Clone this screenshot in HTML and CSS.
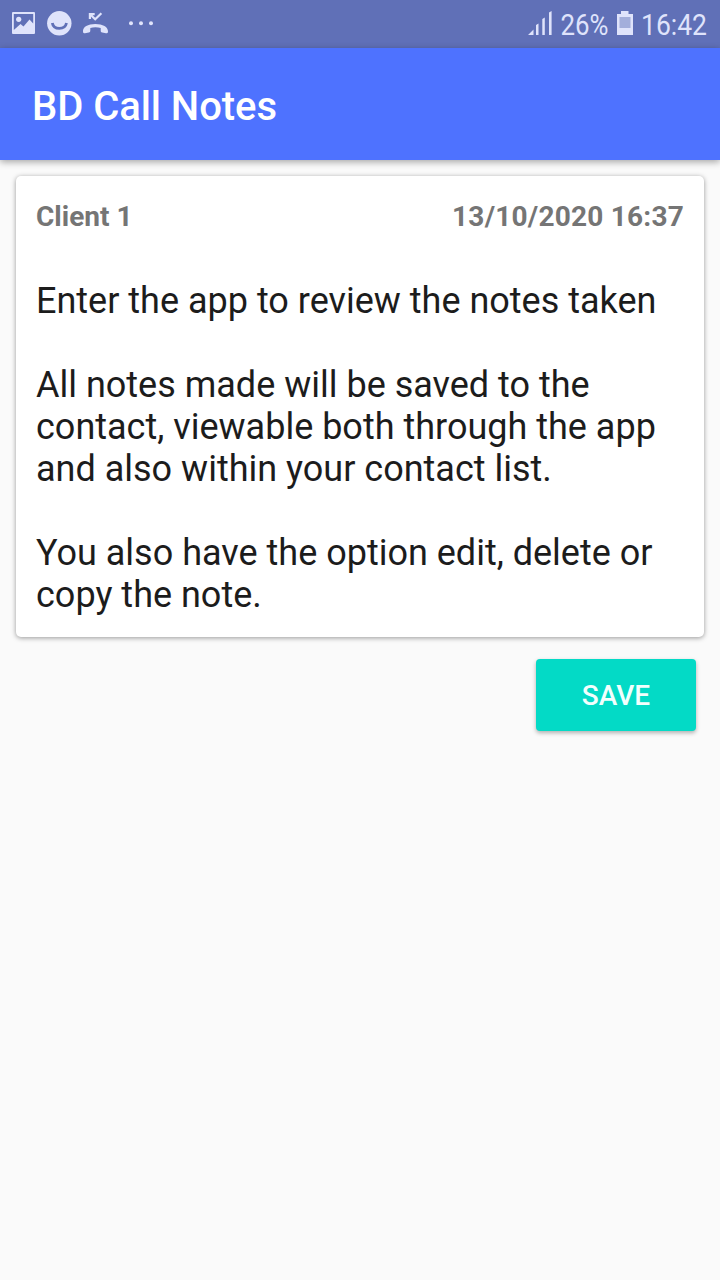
FILE: index.html
```html
<!DOCTYPE html>
<html lang="en">
<head>
    <meta charset="UTF-8">
    <meta name="viewport" content="width=device-width, initial-scale=1.0">
    <title>BD Call Notes</title>
    <link rel="stylesheet" href="styles.css">
</head>

<body>
    <div class="status-bar">
        <!-- Notifications: image, smiley, missed call, more -->
        <svg class="notifications" width="160" height="48" viewBox="0 0 160 48">
            <path fill-rule="evenodd" d="M13 12h21a1 1 0 0 1 1 1v20a1 1 0 0 1-1 1H13a1 1 0 0 1-1-1V13a1 1 0 0 1 1-1zM13.800 14v16l6.700-6 3 2.500 6-7 3.700 4V14z"/>
            <circle cx="18.700" cy="19.300" r="2.600"/>
            <circle cx="59.300" cy="23.300" r="12.200"/>
            <path class="smile" d="M52.300 23c1.300 7.200 12.700 7.200 14.200 0"/>
            <path d="M83 31.500c-.4-4.800 5-7.600 12.300-7.600s13 2.800 12.700 7.600c0 1.500-.8 1.700-2 1.700l-3.800-.6c-1.200-.2-1.500-.8-1.500-2v-2.500c-3-1.300-7.500-1.300-10.400 0v2.500c0 1.200-.4 1.800-1.500 2l-3.800.6c-1.200 0-2 0-2-1.700z"/>
            <path class="missed" d="M90 14.300l5.200 5 6.200-6M89.900 19v-4.900h4.800"/>
            <circle cx="131" cy="23.300" r="2"/>
            <circle cx="141" cy="23.300" r="2"/>
            <circle cx="151" cy="23.300" r="2"/>
        </svg>

        <!-- Signal, battery and clock -->
        <svg class="system" width="200" height="48" viewBox="520 0 200 48">
            <path d="M528 35l5.500-5.500V35zM536 25l2.500-1.500V35H536zM542.300 19l2.500-1.500V35h-2.500zM549 12.500l2.600-1.500v24H549z"/>
            <text x="560.500" y="35" textLength="48" lengthAdjust="spacingAndGlyphs">26%</text>
            <path d="M617 14h4v-3h7.500v3h4.500v21h-16z"/>
            <rect class="battery-empty" x="619.500" y="17" width="11" height="11"/>
            <text x="641" y="35" textLength="66" lengthAdjust="spacingAndGlyphs">16:42</text>
        </svg>
    </div>

    <header class="app-bar">
        <h1>BD Call Notes</h1>
    </header>

    <main class="content">
        <div class="note-card">
            <div class="note-header">
                <span>Client 1</span>
                <span class="note-date">13/10/2020 16:37</span>
            </div>
            <div class="note-text">
                <p>Enter the app to review the notes taken</p>
                <p>All notes made will be saved to the contact, viewable both through the app and also within your contact list.</p>
                <p>You also have the option edit, delete or copy the note.</p>
            </div>
        </div>
        <button class="save-button">SAVE</button>
    </main>
</body>
</html>
```
FILE: styles.css
```css
body {
    font-family: Roboto, Arial, sans-serif;
    color: #1c1c1c;
    background-color: #fafafa;
    margin: 0;
    min-height: 100vh;
}

.status-bar {
    display: flex;
    justify-content: space-between;
    height: 48px;
    background-color: #6070b7;
}

.status-bar svg {
    display: block;
    fill: #dfe3fb;
    font-size: 30px;
}

.status-bar .smile {
    fill: none;
    stroke: #6070b7;
    stroke-width: 2.8;
}

.status-bar .missed {
    fill: none;
    stroke: #dfe3fb;
    stroke-width: 2.2;
}

.status-bar .battery-empty {
    fill: #a3aedb;
}

.app-bar {
    display: flex;
    align-items: center;
    height: 112px;
    padding: 0 32px;
    background-color: #4e72ff;
    box-shadow: 0 2px 7px rgba(0, 0, 0, 0.35);
}

h1 {
    margin: 4px 0 0;
    font-size: 40px;
    font-weight: 500;
    letter-spacing: -0.06px;
    color: #fff;
}

.content {
    display: flex;
    flex-direction: column;
    padding: 16px;
}

.note-card {
    height: 420px;
    padding: 21px 20px 20px;
    background-color: #fff;
    border-radius: 5px;
    box-shadow: 0 1px 5px rgba(0, 0, 0, 0.4);
}

.note-header {
    display: flex;
    justify-content: space-between;
    font-size: 28px;
    font-weight: 700;
    line-height: 40px;
    color: #757575;
}

.note-date {
    letter-spacing: 0.22px;
}

.note-text {
    margin-top: 43px;
    font-size: 36px;
    line-height: 42px;
}

.note-text p {
    margin: 0 0 42px;
}

.save-button {
    align-self: flex-end;
    width: 160px;
    height: 72px;
    margin: 22px 8px 0 0;
    padding: 0;
    border: none;
    border-radius: 4px;
    font-family: inherit;
    font-size: 28px;
    font-weight: 500;
    color: #f2fffd;
    background-color: #03dac6;
    box-shadow: 0 2px 4px rgba(0, 0, 0, 0.3);
}
```
